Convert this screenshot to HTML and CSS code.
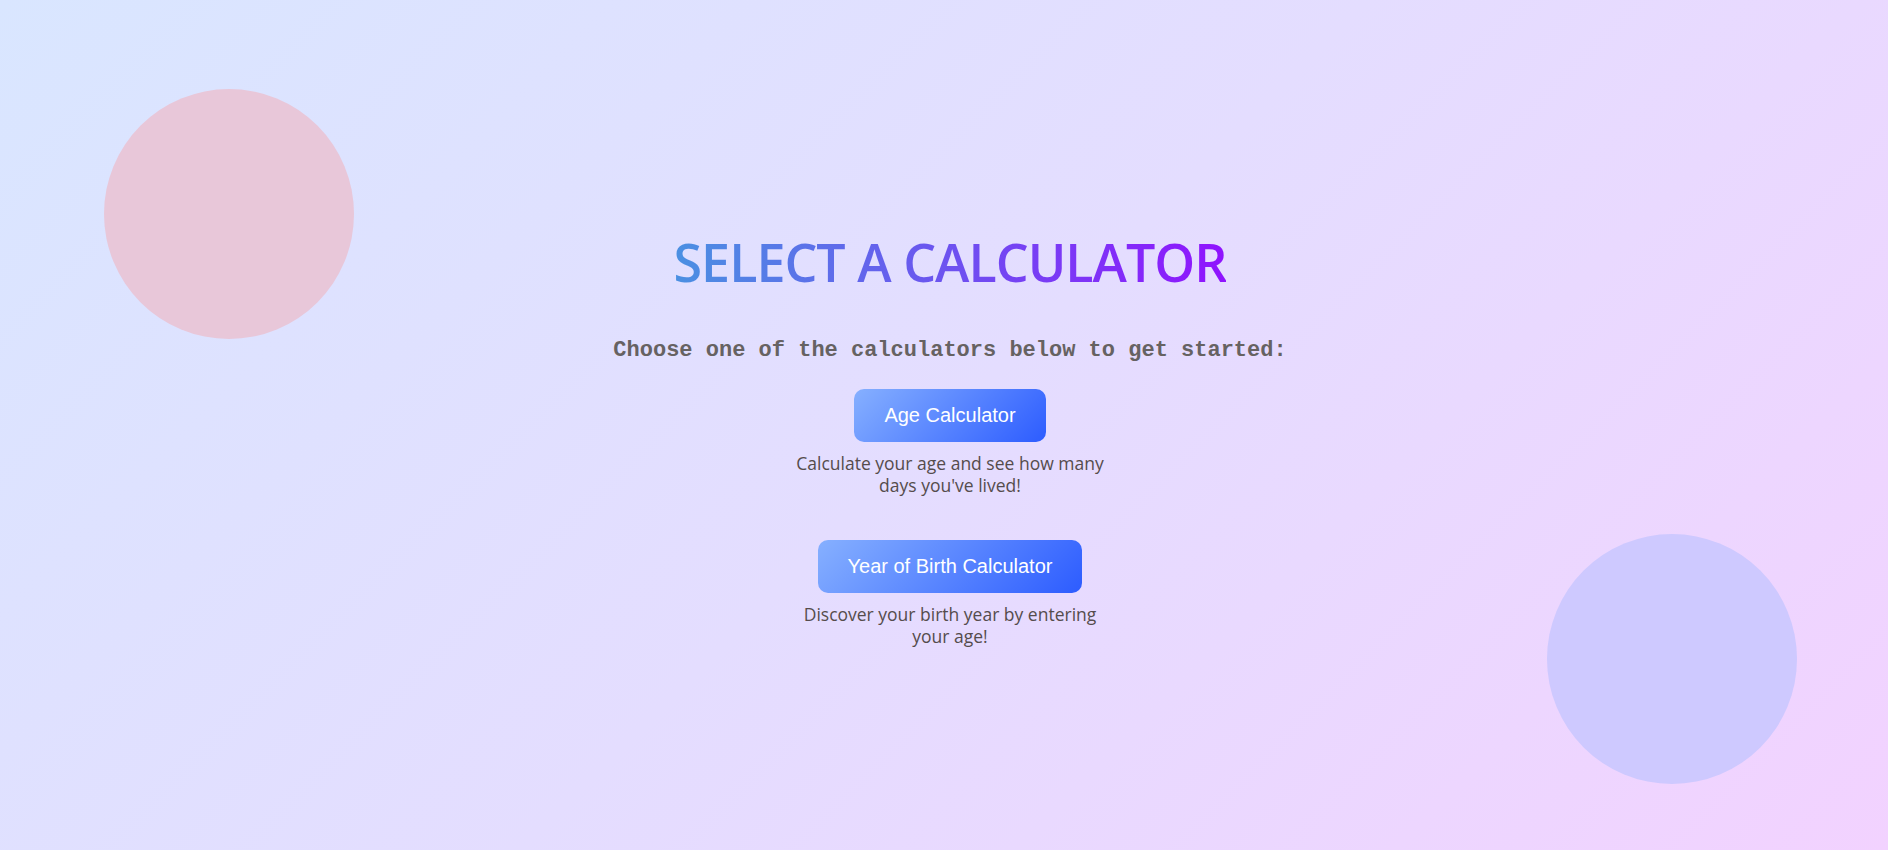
FILE: index.html
```html
<!DOCTYPE html>
<html lang="en">
<head>
<meta charset="utf-8">
<title>Select a Calculator</title>
<link rel="stylesheet" href="styles.css">
</head>
<body>
<div class="circle circle-pink"></div>
<div class="circle circle-blue"></div>
<main class="container">
  <h1 class="title">SELECT A CALCULATOR</h1>
  <p class="subtitle">Choose one of the calculators below to get started:</p>
  <div class="calc">
    <button class="calc-btn" type="button">Age Calculator</button>
    <p class="calc-desc">Calculate your age and see how many days you've lived!</p>
  </div>
  <div class="calc">
    <button class="calc-btn" type="button">Year of Birth Calculator</button>
    <p class="calc-desc">Discover your birth year by entering your age!</p>
  </div>
</main>
</body>
</html>
```

FILE: styles.css
```css
html, body {
  margin: 0;
  padding: 0;
}

body {
  width: 1888px;
  height: 850px;
  overflow: hidden;
  position: relative;
  background: linear-gradient(135deg, #d9e6ff 0%, #e4ddff 50%, #f2d2ff 100%);
  font-family: "Open Sans", "Noto Sans", sans-serif;
}

.circle {
  position: absolute;
  width: 250px;
  height: 250px;
  border-radius: 50%;
}

.circle-pink {
  left: 104px;
  top: 89px;
  background: #e8c7d9;
}

.circle-blue {
  left: 1547px;
  top: 534px;
  background: #cec9ff;
}

.container {
  position: relative;
  display: flex;
  flex-direction: column;
  align-items: center;
  padding-top: 232px;
  padding-left: 12px;
}

.title {
  margin: 0;
  font-family: "Open Sans", sans-serif;
  font-weight: 600;
  font-size: 52px;
  line-height: 60px;
  letter-spacing: -1px;
  background: linear-gradient(90deg, #4a90e2, #9013fe);
  -webkit-background-clip: text;
  background-clip: text;
  color: transparent;
}

.subtitle {
  margin: 45px 0 0;
  font-family: "Liberation Mono", "Courier New", monospace;
  font-weight: 700;
  font-size: 22px;
  line-height: 28px;
  color: #666262;
}

.calc {
  width: 320px;
  display: flex;
  flex-direction: column;
  align-items: center;
  margin-top: 24px;
}

.calc + .calc {
  margin-top: 44px;
}

.calc-btn {
  border: none;
  border-radius: 10px;
  padding: 15px 30px;
  font-family: "Liberation Sans", Arial, sans-serif;
  font-size: 20px;
  line-height: 23px;
  color: #ffffff;
  background: linear-gradient(135deg, #86b0ff 0%, #2d5cff 100%);
  cursor: pointer;
}

.calc-desc {
  margin: 10px 0 0;
  text-align: center;
  font-family: "Open Sans", sans-serif;
  font-size: 17.5px;
  line-height: 22px;
  color: #554c4c;
}
```
